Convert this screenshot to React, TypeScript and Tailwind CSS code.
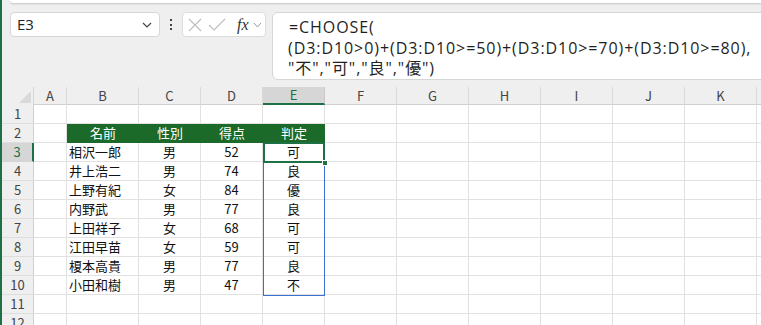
import React from "react";

const cols = [
  { key: "A", w: 33 },
  { key: "B", w: 72 },
  { key: "C", w: 62 },
  { key: "D", w: 62 },
  { key: "E", w: 62 },
  { key: "F", w: 72 },
  { key: "G", w: 72 },
  { key: "H", w: 72 },
  { key: "I", w: 72 },
  { key: "J", w: 72 },
  { key: "K", w: 72 },
  { key: "L", w: 72 },
];

const people = [
  ["相沢一郎", "男", "52", "可"],
  ["井上浩二", "男", "74", "良"],
  ["上野有紀", "女", "84", "優"],
  ["内野武", "男", "77", "良"],
  ["上田祥子", "女", "68", "可"],
  ["江田早苗", "女", "59", "可"],
  ["榎本高貴", "男", "77", "良"],
  ["小田和樹", "男", "47", "不"],
];

const headers = ["名前", "性別", "得点", "判定"];

function cellContent(row: number, col: string) {
  if (row === 2) {
    const i = ["B", "C", "D", "E"].indexOf(col);
    if (i >= 0) return { text: headers[i], header: true };
  }
  if (row >= 3 && row <= 10) {
    const p = people[row - 3];
    const i = ["B", "C", "D", "E"].indexOf(col);
    if (i >= 0) return { text: p[i], header: false, left: col === "B" };
  }
  return null;
}

export default function App() {
  const rows = Array.from({ length: 12 }, (_, i) => i + 1);

  return (
    <div
      className="w-[761px] h-[325px] overflow-hidden bg-[#efefef] flex"
      style={{ fontFamily: '"Noto Sans CJK JP", "Open Sans", sans-serif' }}
    >
      {/* left accent */}
      <div className="w-[2px] shrink-0 bg-[#1e7145]" />

      <div className="flex-1 flex flex-col min-w-0 overflow-hidden">
        {/* ribbon bottom edge */}
        <div className="shrink-0 h-[3px] ml-[8px] bg-white rounded-bl-[6px] shadow-[0_1px_2px_rgba(0,0,0,0.18)]" />

        {/* formula bar row */}
        <div className="shrink-0 flex items-start mt-[9px] h-[68px]">
          {/* name box */}
          <div className="ml-[8px] w-[150px] h-[25px] bg-white border border-[#d6d6d6] rounded-[4px] flex items-center justify-between pl-[6px] pr-[6px]">
            <span className="text-[15px] text-[#222]" style={{ fontFamily: '"Open Sans", sans-serif' }}>E3</span>
            <svg width="10" height="6" viewBox="0 0 10 6" className="mr-[1px]">
              <path d="M1 1 L5 5 L9 1" fill="none" stroke="#444" strokeWidth="1.2" />
            </svg>
          </div>

          {/* vertical dots */}
          <div className="w-[22px] h-[25px] flex flex-col items-center justify-center gap-[2.5px]">
            <span className="w-[2px] h-[2px] bg-[#444]" />
            <span className="w-[2px] h-[2px] bg-[#444]" />
            <span className="w-[2px] h-[2px] bg-[#444]" />
          </div>

          {/* cancel / enter / fx */}
          <div className="w-[84px] h-[25px] bg-white border border-[#dcdcdc] rounded-[4px] flex items-center pl-[5px]">
            <svg width="14" height="14" viewBox="0 0 14 14">
              <path d="M1 1 L13 13 M13 1 L1 13" stroke="#bdbdbd" strokeWidth="1.1" />
            </svg>
            <svg width="18" height="14" viewBox="0 0 18 14" className="ml-[6px]">
              <path d="M1 7 L6 12 L17 1" fill="none" stroke="#bdbdbd" strokeWidth="1.1" />
            </svg>
            <span
              className="ml-[11px] text-[16px] italic text-[#333] leading-none"
              style={{ fontFamily: '"Liberation Serif", serif' }}
            >
              fx
            </span>
            <svg width="9" height="6" viewBox="0 0 9 6" className="ml-[4px] mt-[1px]">
              <path d="M1 1 L4.5 5 L8 1" fill="none" stroke="#9a9a9a" strokeWidth="1" />
            </svg>
          </div>

          {/* formula input */}
          <div
            className="ml-[6px] flex-1 mr-[-12px] h-[68px] bg-white border border-[#d6d6d6] rounded-[6px] pl-[15px] pt-[4px] text-[16px] leading-[20.5px] text-[#1f1f1f] tracking-[0.93px]"
            style={{ fontFamily: '"Open Sans", "Noto Sans CJK JP", sans-serif' }}
          >
            <div className="pl-[1px]">=CHOOSE(</div>
            <div>(D3:D10&gt;0)+(D3:D10&gt;=50)+(D3:D10&gt;=70)+(D3:D10&gt;=80),</div>
            <div>"不","可","良","優")</div>
          </div>
        </div>

        {/* sheet */}
        <div className="shrink-0 mt-[7px] relative">
          {/* column headers */}
          <div className="flex h-[18px]">
            <div className="w-[32px] shrink-0 relative border-r border-[#d4d4d4]">
              <svg width="12" height="12" viewBox="0 0 12 12" className="absolute right-[2px] bottom-[2px]">
                <path d="M12 0 L12 12 L0 12 Z" fill="#d9d9d9" />
              </svg>
            </div>
            {cols.map((c) => (
              <div
                key={c.key}
                style={{ width: c.w }}
                className={
                  c.key === "E"
                    ? "shrink-0 flex items-center justify-center text-[13px] text-[#1e6e3f] bg-[#d6d6d6] border-r border-[#c8c8c8] border-b-2 border-b-[#1e7145]"
                    : "shrink-0 flex items-center justify-center text-[13px] text-[#444] border-r border-[#dadada] border-b border-b-[#d0d0d0]"
                }
              >
                {c.key}
              </div>
            ))}
          </div>

          {/* rows */}
          {rows.map((r) => (
            <div key={r} className="flex h-[19px]">
              <div
                className={
                  r === 3
                    ? "w-[32px] shrink-0 flex items-center justify-center text-[13px] text-[#1e6e3f] bg-[#d6d6d6] border-r-2 border-[#1e7145] border-b border-b-[#d4d4d4]"
                    : "w-[32px] shrink-0 flex items-center justify-center text-[13px] text-[#444] border-r border-[#d0d0d0] border-b border-b-[#dedede]"
                }
              >
                {r}
              </div>
              {cols.map((c) => {
                const cell = cellContent(r, c.key);
                if (cell && cell.header) {
                  return (
                    <div
                      key={c.key}
                      style={{ width: c.w }}
                      className="shrink-0 flex items-center justify-center bg-[#1b6a2a] text-white text-[13px] border-b border-[#1b6a2a]"
                    >
                      {cell.text}
                    </div>
                  );
                }
                return (
                  <div
                    key={c.key}
                    style={{ width: c.w }}
                    className={
                      cell && cell.left
                        ? "shrink-0 flex items-center pl-[2px] bg-white text-[13px] text-[#111] border-r border-b border-[#e1e1e1]"
                        : "shrink-0 flex items-center justify-center bg-white text-[13px] text-[#111] border-r border-b border-[#e1e1e1]"
                    }
                  >
                    {cell ? cell.text : ""}
                  </div>
                );
              })}
            </div>
          ))}

          {/* selection: E4:E10 range */}
          <div className="absolute left-[261px] top-[75px] w-[62px] h-[134px] border border-[#3b6fd1] pointer-events-none" />
          {/* active cell E3 */}
          <div className="absolute left-[261px] top-[55px] w-[62px] h-[21px] border-2 border-[#1e7145] pointer-events-none" />
          <div className="absolute left-[320px] top-[73px] w-[6px] h-[6px] bg-[#1e7145] border border-white pointer-events-none" />
        </div>
      </div>
    </div>
  );
}
